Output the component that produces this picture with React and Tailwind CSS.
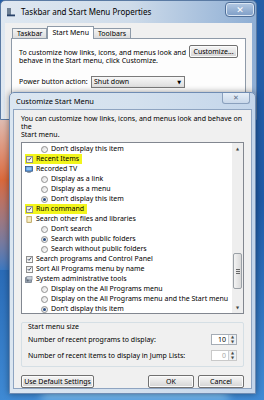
import React from "react";

const font = { fontFamily: '"Noto Sans", "DejaVu Sans", sans-serif' };

const Check = () => (
  <span className="flex h-[7px] w-[7px] items-center justify-center border border-[#8f8f8f] bg-gradient-to-br from-[#e6e6e6] to-white">
    <svg viewBox="0 0 8 8" className="h-[6px] w-[6px]">
      <path d="M1.2 4.2 L3.2 6.2 L6.8 1.4" fill="none" stroke="#2a3c5c" strokeWidth="1.4" />
    </svg>
  </span>
);

const Radio = ({ on }) => (
  <span className="flex h-[7px] w-[7px] items-center justify-center rounded-full border border-[#8f8f8f] bg-gradient-to-br from-[#dcdcdc] to-white">
    {on && <span className="h-[3px] w-[3px] rounded-full bg-[#2b4f85]" />}
  </span>
);

const TvIcon = () => (
  <svg viewBox="0 0 9 8" className="h-[7px] w-[8px]">
    <rect x="0.5" y="0.5" width="8" height="5.5" fill="#3f7fcf" stroke="#254a7a" strokeWidth="0.8" />
    <rect x="1.5" y="1.4" width="6" height="3.6" fill="#8fc4f2" />
    <rect x="2.5" y="6.4" width="4" height="1.2" fill="#5b6c80" />
  </svg>
);

const FolderIcon = () => (
  <svg viewBox="0 0 8 8" className="h-[7px] w-[7px]">
    <rect x="1" y="0.5" width="5.5" height="7" fill="#e9d79a" stroke="#a88f45" strokeWidth="0.7" />
    <rect x="2" y="1.5" width="3.5" height="5" fill="#f6edc6" />
  </svg>
);

const AdminIcon = () => (
  <svg viewBox="0 0 9 8" className="h-[7px] w-[8px]">
    <rect x="0.5" y="2" width="7" height="5.5" fill="#9aa6b4" stroke="#5b6675" strokeWidth="0.7" />
    <rect x="2" y="0.5" width="6" height="4" fill="#c7cfd8" stroke="#6c7684" strokeWidth="0.6" />
    <circle cx="3" cy="5.2" r="1.2" fill="#5b6675" />
  </svg>
);

const rows = [
  { lvl: 1, kind: "radio", text: "Don’t display this item" },
  { lvl: 0, kind: "check", text: "Recent Items", hl: true },
  { lvl: 0, kind: "tv", text: "Recorded TV" },
  { lvl: 1, kind: "radio", text: "Display as a link" },
  { lvl: 1, kind: "radio", text: "Display as a menu" },
  { lvl: 1, kind: "radio", on: true, text: "Don’t display this item" },
  { lvl: 0, kind: "check", text: "Run command", hl: true },
  { lvl: 0, kind: "folder", text: "Search other files and libraries" },
  { lvl: 1, kind: "radio", text: "Don’t search" },
  { lvl: 1, kind: "radio", on: true, text: "Search with public folders" },
  { lvl: 1, kind: "radio", text: "Search without public folders" },
  { lvl: 0, kind: "check", text: "Search programs and Control Panel" },
  { lvl: 0, kind: "check", text: "Sort All Programs menu by name" },
  { lvl: 0, kind: "admin", text: "System administrative tools" },
  { lvl: 1, kind: "radio", text: "Display on the All Programs menu" },
  { lvl: 1, kind: "radio", text: "Display on the All Programs menu and the Start menu" },
  { lvl: 1, kind: "radio", on: true, text: "Don’t display this item" },
];

const Row = ({ row }) => {
  const icon =
    row.kind === "radio" ? <Radio on={row.on} /> :
    row.kind === "check" ? <Check /> :
    row.kind === "tv" ? <TvIcon /> :
    row.kind === "folder" ? <FolderIcon /> : <AdminIcon />;
  return (
    <div className={`flex h-[10px] items-center ${row.lvl ? "pl-[18px]" : "pl-[3px]"}`}>
      <div className={`flex h-[10px] items-center gap-[3px] pr-[3px] ${row.hl ? "bg-[#f2f51c]" : ""}`}>
        <span className="flex w-[8px] justify-center">{icon}</span>
        <span className="whitespace-nowrap">{row.text}</span>
      </div>
    </div>
  );
};

const Btn = ({ children, className = "" }) => (
  <div className={`flex items-center justify-center rounded-[2px] border border-[#707070] bg-gradient-to-b from-[#f6f6f6] via-[#e6e6e6] to-[#d4d4d4] shadow-[inset_0_0_0_1px_#fbfbfb] ${className}`}>
    {children}
  </div>
);

const Spin = ({ value, disabled }) => (
  <div className={`flex h-[11px] w-[26px] items-center border ${disabled ? "border-[#c9c9c9] text-[#a8a8a8]" : "border-[#a5acb5] text-black"} bg-white`}>
    <span className="flex-1 pr-[2px] text-right">{value}</span>
    <div className="flex h-full w-[8px] flex-col border-l border-[#c9ced4] bg-[#eef0f3]">
      <span className="flex flex-1 items-center justify-center text-[4px] leading-none text-[#4a4a4a]">▲</span>
      <span className="flex flex-1 items-center justify-center text-[4px] leading-none text-[#4a4a4a]">▼</span>
    </div>
  </div>
);

export default function App() {
  return (
    <div style={font} className="relative h-[400px] w-[264px] overflow-hidden bg-gradient-to-b from-[#245ea6] via-[#1f5aa6] to-[#3f8ad4] text-[7px] leading-[8px] text-black">
      {/* wallpaper bits on the left */}
      <div className="absolute left-0 top-[90px] h-[180px] w-[10px] bg-gradient-to-b from-[#d9e2ea] via-[#d9683a] to-[#3b78c0]" />
      <div className="absolute bottom-0 left-[40px] h-[10px] w-[190px] rounded-t-full bg-[#7fc0f0] blur-[4px]" />

      {/* outer window */}
      <div className="absolute left-0 top-0 h-[120px] w-[257px] rounded-t-[5px] border border-[#5a7aa3] bg-gradient-to-r from-[#dfe8f1] via-[#cfdcea] to-[#8eaed4]">
        <div className="flex h-[22px] items-center pl-[5px]">
          <svg viewBox="0 0 10 10" className="mr-[5px] h-[10px] w-[10px]">
            <rect x="1" y="1" width="4" height="7" fill="#6d7f93" />
            <rect x="1" y="7.5" width="8" height="1.8" fill="#28436a" />
          </svg>
          <span className="text-[8px] text-black">Taskbar and Start Menu Properties</span>
          <div className="ml-auto mr-[1px] mt-[1px] flex h-[15px] w-[30px] items-center justify-center self-start rounded-[4px] border border-[#4f6f99] bg-gradient-to-b from-[#b4c9e3] to-[#7d9dc6] text-[9px] font-bold text-white shadow-[inset_0_0_0_1px_#dbe6f3]">
            ✕
          </div>
        </div>
        <div className="mx-[4px] h-[96px] bg-[#f0f0f0] px-[6px] pt-[3px]">
          <div className="flex items-end pl-[1px]">
            <div className="flex h-[10px] items-center border border-b-0 border-[#8e9aa8] bg-gradient-to-b from-[#f4f4f4] to-[#dcdcdc] px-[4px]">Taskbar</div>
            <div className="relative -mb-[1px] flex h-[13px] items-center border border-b-0 border-[#8e9aa8] bg-white px-[4px]">Start Menu</div>
            <div className="flex h-[10px] items-center border border-b-0 border-l-0 border-[#8e9aa8] bg-gradient-to-b from-[#f4f4f4] to-[#dcdcdc] px-[4px]">Toolbars</div>
          </div>
          <div className="h-[80px] border border-[#8e9aa8] bg-[#fdfdfd] px-[7px] pt-[6px]">
            <div className="flex items-start justify-between">
              <div className="pt-[4px]">
                <div>To customize how links, icons, and menus look and</div>
                <div>behave in the Start menu, click Customize.</div>
              </div>
              <Btn className="h-[13px] w-[49px]">Customize...</Btn>
            </div>
            <div className="mt-[11px] flex items-center">
              <span className="w-[72px]">Power button action:</span>
              <div className="flex h-[12px] w-[94px] items-center border border-[#7a7a7a] bg-gradient-to-b from-[#f7f7f7] to-[#dedede] pl-[2px]">
                <span className="flex-1">Shut down</span>
                <span className="pr-[3px] text-[5px]">▼</span>
              </div>
            </div>
          </div>
        </div>
      </div>

      {/* inner dialog */}
      <div className="absolute left-[9px] top-[92px] flex h-[302px] w-[247px] flex-col rounded-t-[5px] border border-[#6f8cb3] bg-gradient-to-r from-[#dbe6f1] via-[#d4e1ee] to-[#c3d5ea] px-[3px] pb-[4px] shadow-[0_0_6px_rgba(0,0,0,0.4)]">
        <div className="flex h-[17px] items-start">
          <span className="pl-[3px] pt-[4px] text-[7.5px]">Customize Start Menu</span>
          <div className="ml-auto mr-[2px] flex h-[11px] w-[28px] items-center justify-center rounded-b-[3px] border border-t-0 border-[#8aa0bd] bg-gradient-to-b from-[#e6eef7] to-[#c9d8ea] text-[7px] text-[#5b6d85]">
            ✕
          </div>
        </div>
        <div className="flex flex-1 flex-col border border-[#8ea4c1] bg-[#f0f0f0] px-[7px] pt-[5px]">
          <div>You can customize how links, icons, and menus look and behave on the</div>
          <div>Start menu.</div>

          <div className="mt-[3px] flex h-[172px] border border-[#828790] bg-white">
            <div className="flex-1 pt-[1px]">
              {rows.map((r, i) => (
                <Row key={i} row={r} />
              ))}
            </div>
            <div className="flex w-[11px] flex-col bg-[#eeeeee]">
              <span className="flex h-[11px] items-center justify-center text-[4px] text-[#444]">▲</span>
              <div className="flex-1 pt-[99px]">
                <div className="mx-[1px] flex h-[36px] items-center justify-center rounded-[2px] border border-[#9aa0a6] bg-gradient-to-r from-[#f3f3f3] to-[#d9d9d9]">
                  <div className="flex flex-col gap-[1px]">
                    <span className="h-px w-[4px] bg-[#666]" />
                    <span className="h-px w-[4px] bg-[#666]" />
                    <span className="h-px w-[4px] bg-[#666]" />
                  </div>
                </div>
              </div>
              <span className="flex h-[11px] items-center justify-center text-[4px] text-[#444]">▼</span>
            </div>
          </div>

          <div className="mt-[8px] flex h-[45px] flex-col rounded-[2px] border border-[#d5dfe5] px-[6px]">
            <div>Start menu size</div>
            <div className="mt-[3px] flex items-center justify-between">
              <span>Number of recent programs to display:</span>
              <Spin value="10" />
            </div>
            <div className="mt-[5px] flex items-center justify-between">
              <span>Number of recent items to display in Jump Lists:</span>
              <Spin value="0" disabled />
            </div>
          </div>

          <div className="mt-[8px] flex items-center">
            <Btn className="h-[13px] w-[73px]">Use Default Settings</Btn>
            <Btn className="ml-auto h-[13px] w-[46px]">OK</Btn>
            <Btn className="ml-[4px] h-[13px] w-[46px]">Cancel</Btn>
          </div>
        </div>
      </div>
    </div>
  );
}
